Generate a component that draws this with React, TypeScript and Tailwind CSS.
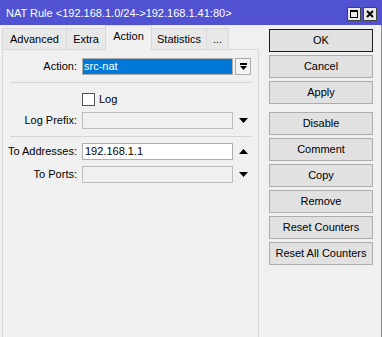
import React from "react";

const font = { fontFamily: '"Liberation Sans", Arial, sans-serif' };

function DownTri() {
  return (
    <svg width="9" height="5" viewBox="0 0 9 5">
      <polygon points="0,0 9,0 4.5,5" fill="#000" />
    </svg>
  );
}
function UpTri() {
  return (
    <svg width="9" height="5" viewBox="0 0 9 5">
      <polygon points="0,5 9,5 4.5,0" fill="#000" />
    </svg>
  );
}

function Row({
  label,
  children,
  icon,
  className = "",
}: {
  label: string;
  children: React.ReactNode;
  icon?: React.ReactNode;
  className?: string;
}) {
  return (
    <div className={"flex items-center h-[17px] " + className}>
      <div className="w-[74px] text-right leading-none whitespace-nowrap">{label}</div>
      <div className="ml-[5px] w-[151px] h-[17px] flex">{children}</div>
      <div className="ml-[2px] w-[16px] h-[17px] flex items-center justify-center">{icon}</div>
    </div>
  );
}

function Btn({ children, primary = false, className = "" }: { children: React.ReactNode; primary?: boolean; className?: string }) {
  return (
    <div
      className={
        "w-[104px] h-[23px] flex items-center justify-center bg-[#e1e1e1] border leading-none " +
        (primary ? "border-[#1a1a1a] " : "border-[#adadad] ") +
        className
      }
    >
      {children}
    </div>
  );
}

export default function App() {
  return (
    <div className="w-[382px] h-[337px] overflow-hidden bg-[#f0f0f0] text-[11px] text-black flex flex-col" style={font}>
      {/* Title bar */}
      <div className="h-[25px] bg-[#5052d1] flex items-center pl-[6px] pr-[5px] shrink-0">
        <div className="text-white text-[11px] pt-[2px] leading-none whitespace-nowrap flex-1">
          NAT Rule &lt;192.168.1.0/24-&gt;192.168.1.41:80&gt;
        </div>
        <div className="flex gap-[2px] pt-[3px]">
          <div className="w-[14px] h-[14px] bg-[#e8e8e8] border border-[#444] flex items-center justify-center">
            <div className="w-[8px] h-[8px] border border-black border-t-2" />
          </div>
          <div className="w-[14px] h-[14px] bg-[#e8e8e8] border border-[#444] flex items-center justify-center">
            <svg width="8" height="8" viewBox="0 0 8 8">
              <path d="M1 1 L7 7 M7 1 L1 7" stroke="#000" strokeWidth="2" />
            </svg>
          </div>
        </div>
      </div>

      {/* Body */}
      <div className="flex flex-1 border-r border-[#8a8a8a]">
        {/* Left */}
        <div className="w-[259px] pl-[2px] flex flex-col">
          <div className="h-[24px] flex items-end">
            <div className="w-[65px] h-[21px] bg-[#e8e8e8] border border-b-0 border-[#d9d9d9] flex items-center justify-center leading-none">
              Advanced
            </div>
            <div className="-ml-px w-[40px] h-[21px] bg-[#e8e8e8] border border-b-0 border-[#d9d9d9] flex items-center justify-center leading-none">
              Extra
            </div>
            <div className="relative z-10 -ml-px w-[47px] h-[25px] -mb-px bg-[#f0f0f0] border border-b-0 border-[#d9d9d9] flex items-center justify-center leading-none pb-[3px]">
              Action
            </div>
            <div className="-ml-px w-[56px] h-[21px] bg-[#e8e8e8] border border-b-0 border-[#d9d9d9] flex items-center justify-center leading-none">
              Statistics
            </div>
            <div className="-ml-px w-[23px] h-[21px] bg-[#e8e8e8] border border-b-0 border-[#d9d9d9] flex items-center justify-center leading-none">
              ...
            </div>
          </div>
          <div className="flex-1 border border-b-0 border-[#d9d9d9] bg-[#f0f0f0] flex flex-col">
            <Row
              label="Action:"
              className="mt-[8px]"
              icon={
                <div className="w-[16px] h-[17px] border border-[#adadad] bg-[#f4f4f4] flex items-center justify-center">
                  <svg width="7" height="7" viewBox="0 0 7 7">
                    <rect x="0" y="0" width="7" height="2" fill="#000" />
                    <polygon points="0,3 7,3 3.5,7" fill="#000" />
                  </svg>
                </div>
              }
            >
              <div className="w-full h-full border border-[#adadad] bg-[#0078d7] text-white flex items-center pl-[1px] leading-none">
                src-nat
              </div>
            </Row>
            <div className="ml-[7px] mt-[7px] w-[242px] h-px bg-[#d4d4d4]" />
            <div className="mt-[10px] h-[13px] flex items-center">
              <div className="ml-[79px] w-[13px] h-[13px] border border-[#555] bg-white" />
              <div className="ml-[4px] leading-none">Log</div>
            </div>
            <Row label="Log Prefix:" className="mt-[6px]" icon={<DownTri />}>
              <div className="w-full h-full border border-[#bcbcbc] bg-[#f0f0f0]" />
            </Row>
            <div className="ml-[7px] mt-[7px] w-[242px] h-px bg-[#d4d4d4]" />
            <Row label="To Addresses:" className="mt-[6px]" icon={<UpTri />}>
              <div className="w-full h-full border border-[#adadad] bg-white flex items-center pl-[2px] leading-none">
                192.168.1.1
              </div>
            </Row>
            <Row label="To Ports:" className="mt-[6px]" icon={<DownTri />}>
              <div className="w-full h-full border border-[#bcbcbc] bg-[#f0f0f0]" />
            </Row>
          </div>
        </div>

        {/* Right */}
        <div className="flex-1 pl-[10px] pt-[4px] flex flex-col gap-[3px]">
          <Btn primary>OK</Btn>
          <Btn>Cancel</Btn>
          <Btn>Apply</Btn>
          <Btn className="mt-[5px]">Disable</Btn>
          <Btn>Comment</Btn>
          <Btn>Copy</Btn>
          <Btn>Remove</Btn>
          <Btn>Reset Counters</Btn>
          <Btn>Reset All Counters</Btn>
        </div>
      </div>
    </div>
  );
}
